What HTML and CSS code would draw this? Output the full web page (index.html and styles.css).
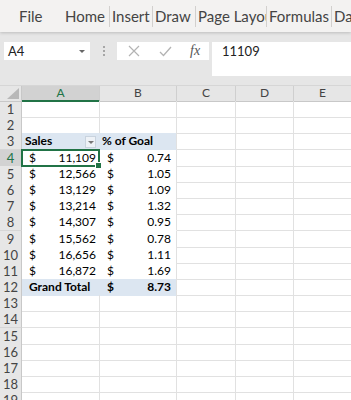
FILE: index.html
```html
<!DOCTYPE html>
<html lang="en">
<head>
  <meta charset="UTF-8">
  <title>Sales pivot</title>
  <link rel="stylesheet" href="styles.css">
</head>
<body>

  <div class="menu">
    <span class="pestana archivo">File</span>
    <span class="pestana p-home">Home</span>
    <span class="pestana p-insert">Insert</span>
    <span class="pestana p-draw">Draw</span>
    <span class="pestana p-page">Page Layout</span>
    <span class="pestana p-form">Formulas</span>
    <span class="pestana p-data">Data</span>
  </div>

  <div class="barra">
    <div class="nombre">
      <span>A4</span>
      <span class="flecha"></span>
    </div>
    <div class="puntos"><i></i><i></i><i></i></div>
    <div class="botones">
      <svg width="12" height="12" viewBox="0 0 12 12"><path d="M1 1 L11 11 M11 1 L1 11" stroke="#b3b3b3" stroke-width="1.2" fill="none"/></svg>
      <svg width="13" height="11" viewBox="0 0 13 11"><path d="M1 6 L4.5 9.5 L12 1" stroke="#b3b3b3" stroke-width="1.3" fill="none"/></svg>
      <span class="fx">fx</span>
    </div>
    <div class="formula">11109</div>
  </div>

  <div class="hoja" id="hoja">
    <div class="fila cabecera">
      <div class="esquina"><span class="triangulo"></span></div>
      <div class="col activa">A</div>
      <div class="col">B</div>
      <div class="col">C</div>
      <div class="col">D</div>
      <div class="col">E</div>
    </div>
  </div>

  <script>
    const ventas = [
      ['11,109', '0.74'], ['12,566', '1.05'], ['13,129', '1.09'], ['13,214', '1.32'],
      ['14,307', '0.95'], ['15,562', '0.78'], ['16,656', '1.11'], ['16,872', '1.69']
    ];

    function celdaDinero(valor) {
      return `<span>$</span><span>${valor}</span>`;
    }

    function armarHoja() {
      const hoja = document.getElementById('hoja');
      for (let n = 1; n <= 19; n++) {
        let clase = '';
        let a = '';
        let b = '';
        if (n === 3) {
          clase = 'titulo';
          a = '<span>Sales</span><span class="filtro"></span>';
          b = '<span>% of Goal</span>';
        } else if (n >= 4 && n <= 11) {
          clase = 'datos';
          a = celdaDinero(ventas[n - 4][0]);
          b = celdaDinero(ventas[n - 4][1]);
        } else if (n === 12) {
          clase = 'total';
          a = '<span>Grand Total</span>';
          b = celdaDinero('8.73');
        }
        if (n === 11) clase += ' ultima';
        const fila = document.createElement('div');
        fila.className = 'fila ' + clase;
        fila.innerHTML =
          `<div class="num ${n === 4 ? 'activa' : ''}">${n}</div>` +
          `<div class="celda ca ${n === 4 ? 'seleccion' : ''}">${a}</div>` +
          `<div class="celda cb">${b}</div>` +
          `<div class="celda"></div><div class="celda"></div><div class="celda"></div>`;
        hoja.appendChild(fila);
      }
    }

    armarHoja();
  </script>

</body>
</html>
```

FILE: styles.css
```css
body {
  margin: 0;
  width: 351px;
  height: 400px;
  overflow: hidden;
  background-color: #e6e6e6;
  font-family: Lato, "Open Sans", sans-serif;
}

/* menu */
.menu {
  display: flex;
  height: 32px;
  align-items: center;
  padding-left: 19px;
  background-color: #f3f2f1;
  box-shadow: 0 1px 3px rgba(0, 0, 0, 0.18);
  position: relative;
  white-space: nowrap;
  overflow: hidden;
}

.pestana {
  font-size: 15px;
  color: #444;
  padding-left: 3px;
  height: 21px;
  line-height: 21px;
  overflow: hidden;
  flex: none;
  border-right: 1px solid #d2d0ce;
}

.archivo { width: 43px; padding-left: 0; border-right: none; }
.p-home { width: 44px; }
.p-insert { width: 40px; padding-left: 2px; }
.p-draw { width: 40px; padding-left: 2px; }
.p-page { width: 68px; padding-left: 2px; }
.p-form { width: 62px; padding-left: 2px; }
.p-data { border-right: none; padding-left: 2px; }

/* formula bar */
.barra {
  display: flex;
  align-items: flex-start;
  padding: 10px 0 9px 4px;
}

.nombre {
  width: 86px;
  height: 18px;
  background-color: #fff;
  display: flex;
  align-items: center;
  justify-content: space-between;
  padding: 0 5px 0 4px;
  box-sizing: border-box;
  font-size: 13px;
  color: #222;
}

.flecha {
  width: 0;
  height: 0;
  border-left: 3px solid transparent;
  border-right: 3px solid transparent;
  border-top: 3px solid #666;
}

.puntos {
  width: 27px;
  height: 18px;
  display: flex;
  flex-direction: column;
  align-items: center;
  justify-content: center;
  gap: 2px;
}

.puntos i {
  width: 2px;
  height: 2px;
  background-color: #a6a6a6;
}

.botones {
  width: 92px;
  height: 18px;
  background-color: #fff;
  display: flex;
  align-items: center;
  padding-left: 11px;
  box-sizing: border-box;
}

.botones svg:first-child { margin-right: 19px; }
.botones svg:nth-child(2) { margin-right: 18px; }

.fx {
  font-family: "Liberation Serif", serif;
  font-style: italic;
  font-size: 14px;
  color: #555;
}

.formula {
  flex: 1;
  height: 34px;
  margin-left: 3px;
  background-color: #fff;
  padding: 1px 0 0 10px;
  box-sizing: border-box;
  font-size: 13px;
  color: #222;
}

/* grid */
.hoja {
  background-color: #fff;
}

.fila {
  display: grid;
  grid-template-columns: 22px 78px 77px 59px 58px 58px;
  height: 16.2px;
}

.cabecera {
  height: 16px;
  background-color: #e6e6e6;
  border-top: 1px solid #d6d6d6;
  box-sizing: border-box;
}

.esquina {
  position: relative;
  border-right: 1px solid #c8c8c8;
  border-bottom: 1px solid #c8c8c8;
}

.triangulo {
  position: absolute;
  right: 2px;
  bottom: 2px;
  width: 0;
  height: 0;
  border-left: 12px solid transparent;
  border-bottom: 11px solid #b8b8b8;
}

.col {
  border-right: 1px solid #cfcfcf;
  border-bottom: 1px solid #c8c8c8;
  text-align: center;
  font-size: 12px;
  line-height: 14px;
  color: #444;
}

.col.activa {
  background-color: #d2d2d2;
  color: #217346;
  border-bottom: 2px solid #217346;
}

.num {
  background-color: #e6e6e6;
  border-right: 1px solid #c8c8c8;
  border-bottom: 1px solid #d6d6d6;
  text-align: center;
  font-size: 13px;
  line-height: 16px;
  color: #444;
}

.num.activa {
  background-color: #d2d2d2;
  color: #217346;
}

.celda {
  border-right: 1px solid #e1e1e1;
  border-bottom: 1px solid #e1e1e1;
  display: flex;
  justify-content: space-between;
  align-items: flex-end;
  padding: 0 3px 1px 3px;
  font-size: 12px;
  line-height: 14px;
  color: #000;
  white-space: nowrap;
}

.datos .ca, .total .ca { padding-left: 7px; }
.datos .cb, .total .cb { padding-left: 7px; padding-right: 5px; }

.datos .ca { border-right-color: #fff; border-bottom-color: #fff; }
.datos .cb { border-bottom-color: #fff; }
.datos.ultima .ca, .datos.ultima .cb { border-bottom-color: #9bc2e6; }

.titulo .ca, .titulo .cb,
.total .ca, .total .cb {
  background-color: #dce6f1;
  font-weight: bold;
  border-bottom-color: #dce6f1;
}

.titulo .ca, .total .ca { border-right-color: #dce6f1; }

.titulo .cb { padding-left: 2px; }

.filtro {
  width: 11px;
  height: 12px;
  margin-bottom: 0;
  background-color: #eef2f7;
  border: 1px solid #c9d3de;
  box-sizing: border-box;
  position: relative;
}

.filtro::after {
  content: "";
  position: absolute;
  left: 2px;
  top: 4px;
  border-left: 3px solid transparent;
  border-right: 3px solid transparent;
  border-top: 3px solid #777;
}

.seleccion {
  position: relative;
}

.seleccion::after {
  content: "";
  position: absolute;
  left: -1px;
  top: -1px;
  right: -1px;
  bottom: -1px;
  border: 2px solid #217346;
}

.seleccion::before {
  content: "";
  position: absolute;
  right: -3px;
  bottom: -3px;
  width: 5px;
  height: 5px;
  background-color: #217346;
  border: 1px solid #fff;
  z-index: 1;
}
```
